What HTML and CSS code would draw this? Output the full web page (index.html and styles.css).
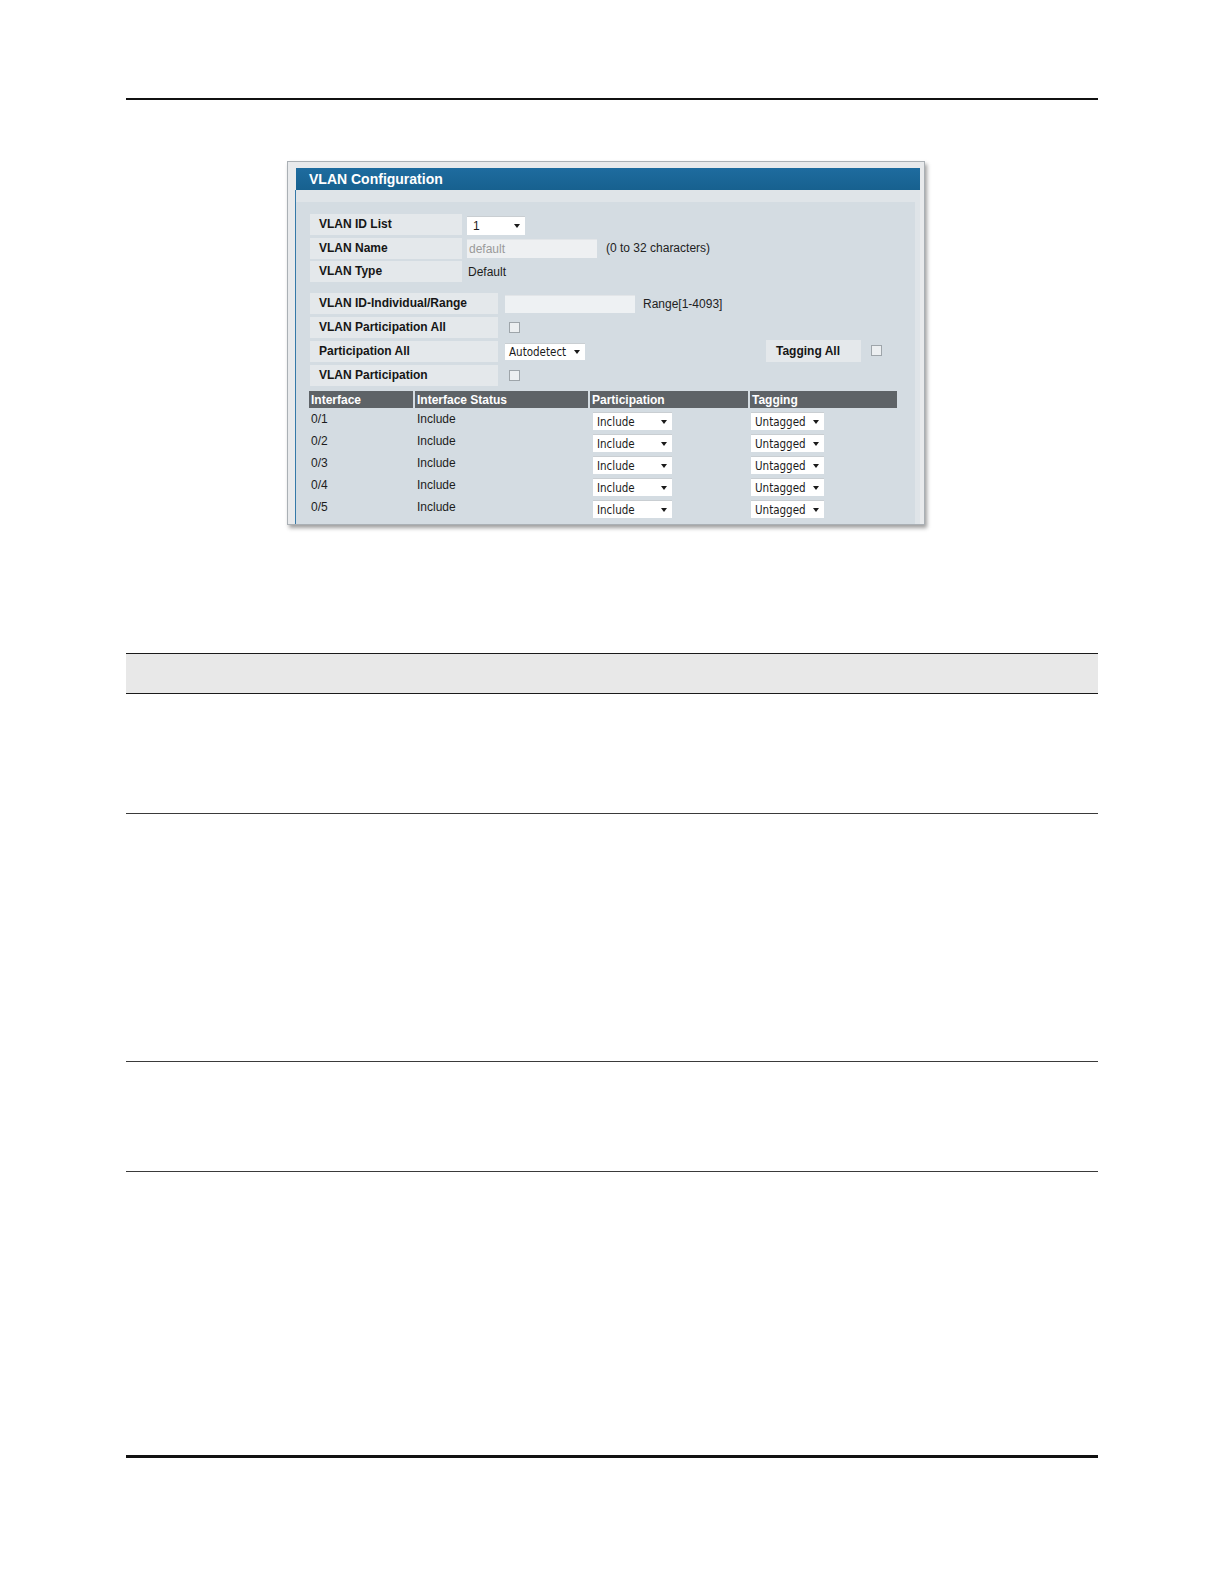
FILE: index.html
```html
<!DOCTYPE html>
<html>
<head>
<meta charset="utf-8">
<title>VLAN Configuration</title>
<link rel="stylesheet" href="styles.css">
</head>
<body>
<div class="doc">
  <div class="rule-top"></div>

  <div class="figure">
    <div class="frame">
      <div class="hdr">VLAN Configuration</div>
      <div class="body">
        <div class="panel">
          <div class="grp g1">
            <div class="row">
              <div class="lbl">VLAN ID List</div>
              <div class="val"><span class="sel s-id"><span class="sel-t">1</span><i class="arr"></i></span></div>
            </div>
            <div class="row">
              <div class="lbl">VLAN Name</div>
              <div class="val"><span class="inp inp-name">default</span><span class="note">(0 to 32 characters)</span></div>
            </div>
            <div class="row">
              <div class="lbl">VLAN Type</div>
              <div class="val"><span class="txt">Default</span></div>
            </div>
          </div>

          <div class="grp g2">
            <div class="row">
              <div class="lbl">VLAN ID-Individual/Range</div>
              <div class="val"><span class="inp inp-range"></span><span class="note note-r">Range[1-4093]</span></div>
            </div>
            <div class="row">
              <div class="lbl">VLAN Participation All</div>
              <div class="val"><span class="chk"></span></div>
            </div>
            <div class="row">
              <div class="lbl">Participation All</div>
              <div class="val">
                <span class="sel s-auto"><span class="sel-t">Autodetect</span><i class="arr"></i></span>
                <span class="lbl lbl-tag">Tagging All</span>
                <span class="chk chk-tag"></span>
              </div>
            </div>
            <div class="row">
              <div class="lbl">VLAN Participation</div>
              <div class="val"><span class="chk"></span></div>
            </div>
          </div>

          <div class="tbl">
            <div class="th">Interface</div>
            <div class="th">Interface Status</div>
            <div class="th">Participation</div>
            <div class="th">Tagging</div>

            <div class="td">0/1</div>
            <div class="td">Include</div>
            <div class="td tsel"><span class="sel s-part"><span class="sel-t">Include</span><i class="arr"></i></span></div>
            <div class="td tsel"><span class="sel s-tag"><span class="sel-t">Untagged</span><i class="arr"></i></span></div>

            <div class="td">0/2</div>
            <div class="td">Include</div>
            <div class="td tsel"><span class="sel s-part"><span class="sel-t">Include</span><i class="arr"></i></span></div>
            <div class="td tsel"><span class="sel s-tag"><span class="sel-t">Untagged</span><i class="arr"></i></span></div>

            <div class="td">0/3</div>
            <div class="td">Include</div>
            <div class="td tsel"><span class="sel s-part"><span class="sel-t">Include</span><i class="arr"></i></span></div>
            <div class="td tsel"><span class="sel s-tag"><span class="sel-t">Untagged</span><i class="arr"></i></span></div>

            <div class="td">0/4</div>
            <div class="td">Include</div>
            <div class="td tsel"><span class="sel s-part"><span class="sel-t">Include</span><i class="arr"></i></span></div>
            <div class="td tsel"><span class="sel s-tag"><span class="sel-t">Untagged</span><i class="arr"></i></span></div>

            <div class="td">0/5</div>
            <div class="td">Include</div>
            <div class="td tsel"><span class="sel s-part"><span class="sel-t">Include</span><i class="arr"></i></span></div>
            <div class="td tsel"><span class="sel s-tag"><span class="sel-t">Untagged</span><i class="arr"></i></span></div>
          </div>
        </div>
      </div>
    </div>
  </div>

  <div class="dtable">
    <div class="dhead"></div>
    <div class="drow r1"></div>
    <div class="drow r2"></div>
    <div class="drow r3"></div>
  </div>

  <div class="rule-bottom"></div>
</div>
</body>
</html>
```

FILE: styles.css
```css
html, body {
  margin: 0;
  padding: 0;
  background: #ffffff;
}

body {
  width: 1224px;
  height: 1584px;
  overflow: hidden;
  font-family: "Liberation Sans", Arial, sans-serif;
  font-size: 12px;
  color: #1c1c1c;
}

.doc {
  margin: 0 126px;
  padding-top: 98px;
}

.rule-top {
  border-top: 2px solid #111;
}

.figure {
  margin-top: 61px;
  margin-left: 161px;
  width: 638px;
}

.frame {
  box-sizing: border-box;
  width: 638px;
  border: 1px solid #aab0b5;
  background: #e8eaec;
  padding: 6px 4px 0 7px;
  box-shadow: 2px 3px 4px rgba(0, 0, 0, 0.38);
}

.hdr {
  margin-left: 1px;
  height: 22px;
  line-height: 23px;
  background: linear-gradient(#1e6c9f, #17618f);
  color: #ffffff;
  font-weight: bold;
  font-size: 14px;
  padding-left: 13px;
}

.body {
  border-left: 1px solid #3579a8;
  background: #dfe4e8;
  height: 334px;
  display: flex;
  flex-direction: column;
}

.panel {
  margin-top: 12px;
  margin-right: 5px;
  flex: 1;
  background: #d4dce2;
  padding: 12px 0 0 14px;
}

.grp {
  display: flex;
  flex-direction: column;
}

.g1 { gap: 2.5px; }
.g2 { gap: 3px; margin-top: 11px; }

.row {
  display: flex;
  height: 21px;
}

.lbl {
  box-sizing: border-box;
  background: #e4e8eb;
  font-weight: bold;
  font-size: 12px;
  line-height: 21px;
  padding-left: 9px;
  color: #161616;
  white-space: nowrap;
}

.g1 .lbl { width: 152px; }
.g2 .lbl { width: 188px; }

.val {
  display: flex;
  align-items: center;
}

.g1 .val { margin-left: 5px; }
.g2 .val { margin-left: 7px; }

.txt {
  margin-left: 1px;
}

.note {
  margin-left: 9px;
  color: #222;
}

.note-r { margin-left: 8px; }

.inp {
  box-sizing: border-box;
  display: block;
  height: 19px;
  line-height: 19px;
  padding-left: 2px;
  color: #9a9a9a;
  background: #eef0f2;
  border-top: 1px solid #e2e5e8;
}

.inp-name { width: 130px; }
.inp-range { width: 130px; height: 18px; background: #eef1f3; }

.chk {
  box-sizing: border-box;
  display: block;
  width: 11px;
  height: 11px;
  margin-left: 4px;
  border: 1px solid #9ea5aa;
  background: #eceff1;
}

.g2 .lbl.lbl-tag {
  width: 95px;
  height: 22px;
  line-height: 22px;
  padding-left: 10px;
  margin-left: 181px;
  align-self: flex-start;
  margin-top: -1px;
}

.chk-tag {
  margin-left: 10px;
  margin-top: -2px;
}

.sel {
  box-sizing: border-box;
  display: flex;
  align-items: center;
  justify-content: space-between;
  background: #ffffff;
  border-top: 1px solid #c9ced2;
  font-family: "DejaVu Sans Condensed", "DejaVu Sans", sans-serif;
  font-size: 11.5px;
  color: #1a1a1a;
  padding: 0 5px 0 4px;
}

.sel-t {
  white-space: nowrap;
}

.arr {
  display: block;
  width: 0;
  height: 0;
  border-left: 3.5px solid transparent;
  border-right: 3.5px solid transparent;
  border-top: 4px solid #1a1a1a;
}

.s-id {
  width: 58px;
  height: 19px;
  font-family: "Liberation Sans", Arial, sans-serif;
  font-size: 12px;
  padding-left: 6px;
  margin-top: 1px;
}

.s-auto {
  width: 80px;
  height: 17px;
}

.tbl {
  margin-top: 5px;
  margin-left: -1px;
  width: 588px;
  display: grid;
  grid-template-columns: 104px 173px 158px 147px;
  grid-template-rows: 17px repeat(5, 22px);
  column-gap: 2px;
}

.th {
  background: #5e6367;
  color: #ffffff;
  font-weight: bold;
  font-size: 12px;
  line-height: 18px;
  padding-left: 2px;
  white-space: nowrap;
}

.td {
  font-size: 12px;
  line-height: 22px;
  padding-left: 2px;
  color: #1c1c1c;
}

.td.tsel {
  padding-left: 0;
  display: flex;
  align-items: flex-start;
}

.s-part {
  width: 79px;
  height: 18px;
  margin-top: 4px;
  margin-left: 3px;
}

.s-tag {
  width: 73px;
  height: 18px;
  margin-top: 4px;
  margin-left: 1px;
}

.dtable {
  margin-top: 128px;
}

.dhead {
  height: 39px;
  background: #e8e8e8;
  border-top: 1px solid #1a1a1a;
  border-bottom: 1px solid #1a1a1a;
}

.drow {
  border-bottom: 1px solid #3a3a3a;
}

.r1 { height: 119px; }
.r2 { height: 247px; }
.r3 { height: 109px; }

.rule-bottom {
  margin-top: 283px;
  border-top: 3px solid #111;
}
```
